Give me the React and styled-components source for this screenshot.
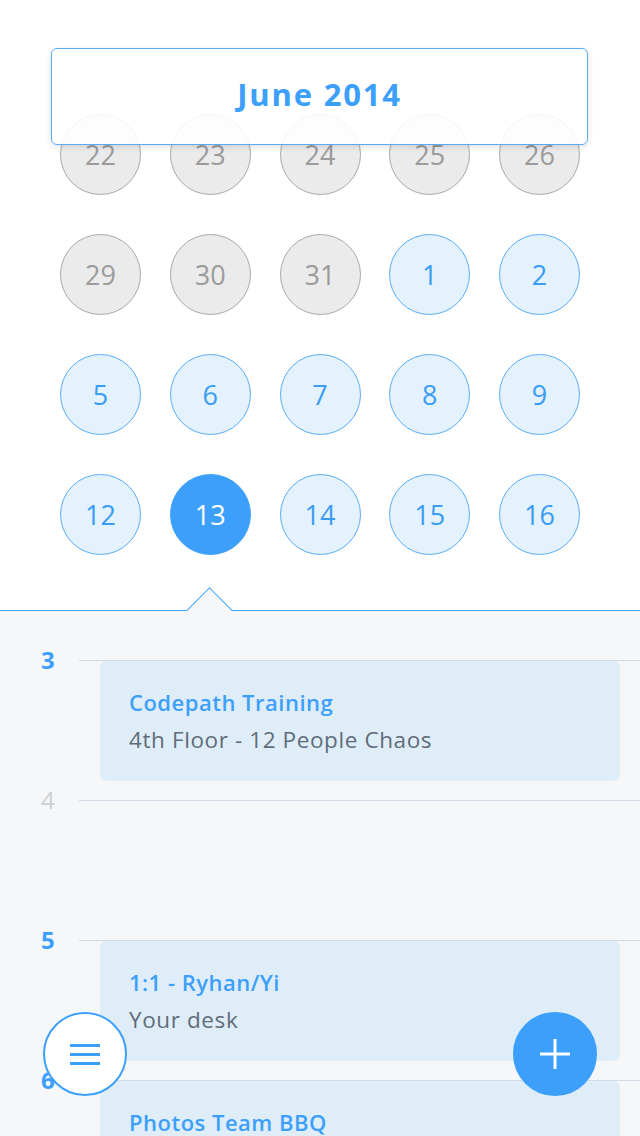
import styled, { createGlobalStyle } from 'styled-components';

const BLUE = '#3ca0fb';

const GlobalStyle = createGlobalStyle`
  html, body {
    margin: 0;
    padding: 0;
    background: #ffffff;
  }
  body {
    font-family: "Open Sans", Lato, sans-serif;
  }
`;

const Screen = styled.div`
  position: relative;
  width: 640px;
  height: 1136px;
  overflow: hidden;
  background: #ffffff;
`;

// Month header floating over the grid
const MonthHeader = styled.div`
  position: absolute;
  top: 48px;
  left: 51px;
  width: 537px;
  height: 97px;
  box-sizing: border-box;
  padding-bottom: 5px;
  border: 1px solid #58acf6;
  border-radius: 6px;
  background: rgba(255, 255, 255, 0.88);
  box-shadow: 0 2px 6px rgba(0, 0, 0, 0.12);
  display: flex;
  align-items: center;
  justify-content: center;
  z-index: 5;
`;

const MonthTitle = styled.h1`
  margin: 0;
  font-size: 31px;
  font-weight: 700;
  letter-spacing: 1.8px;
  color: ${BLUE};
  line-height: 36px;
`;

const Calendar = styled.div`
  padding: 114px 60px 55px;
  display: flex;
  flex-direction: column;
  gap: 39px;
`;

const Week = styled.div`
  display: flex;
  justify-content: space-between;
`;

const Day = styled.div`
  width: 81px;
  height: 81px;
  box-sizing: border-box;
  border-radius: 50%;
  display: flex;
  align-items: center;
  justify-content: center;
  font-size: 27px;
  border: 1px solid
    ${(p) => (p.$kind === 'past' ? '#a9a9a9' : p.$kind === 'selected' ? BLUE : '#5aacf5')};
  background: ${(p) =>
    p.$kind === 'past' ? '#ebebeb' : p.$kind === 'selected' ? BLUE : '#e4f2fe'};
  color: ${(p) =>
    p.$kind === 'past' ? '#9b9b9b' : p.$kind === 'selected' ? '#ffffff' : '#3a9cf2'};
`;

// Agenda below the calendar
const Agenda = styled.div`
  position: relative;
  border-top: 1px solid ${BLUE};
  background: #f5f7f9;
  padding-top: 49px;
  min-height: 600px;
`;

const Notch = styled.div`
  position: absolute;
  top: -17px;
  left: 193px;
  width: 32px;
  height: 32px;
  background: #f5f7f9;
  border-top: 1px solid ${BLUE};
  border-left: 1px solid ${BLUE};
  transform: rotate(45deg);
`;

const HourRow = styled.div`
  position: relative;
  height: 140px;
  display: grid;
  grid-template-columns: 79px 1fr;
`;

const HourLabel = styled.div`
  font-size: 24px;
  font-weight: ${(p) => (p.$busy ? 700 : 400)};
  color: ${(p) => (p.$busy ? BLUE : '#cdd0d4')};
  padding-left: 41px;
  margin-top: -16px;
  line-height: 32px;
`;

const HourBody = styled.div`
  border-top: 1px solid #d2dce6;
  padding: 0 20px 0 21px;
`;

const EventCard = styled.div`
  height: 120px;
  box-sizing: border-box;
  background: #dfedf9;
  border-radius: 6px;
  padding: 26px 29px 0;
`;

const EventTitle = styled.div`
  font-size: 22px;
  font-weight: 600;
  letter-spacing: 0.5px;
  color: ${BLUE};
  line-height: 30px;
`;

const EventPlace = styled.div`
  margin-top: 8px;
  font-size: 22.5px;
  letter-spacing: 0.6px;
  color: #606c79;
  line-height: 30px;
`;

const Fab = styled.button`
  position: absolute;
  bottom: 40px;
  ${(p) => (p.$side === 'left' ? 'left: 43px;' : 'right: 43px;')}
  width: 84px;
  height: 84px;
  box-sizing: border-box;
  border-radius: 50%;
  border: 2px solid ${BLUE};
  background: ${(p) => (p.$filled ? BLUE : '#ffffff')};
  display: flex;
  align-items: center;
  justify-content: center;
  padding: 0;
  z-index: 10;
`;

const weeks = [
  [22, 23, 24, 25, 26],
  [29, 30, 31, 1, 2],
  [5, 6, 7, 8, 9],
  [12, 13, 14, 15, 16],
];

const hours = [
  { hour: 3, event: { title: 'Codepath Training', place: '4th Floor - 12 People Chaos' } },
  { hour: 4 },
  { hour: 5, event: { title: '1:1 - Ryhan/Yi', place: 'Your desk' } },
  { hour: 6, event: { title: 'Photos Team BBQ', place: 'Cafeteria' } },
];

function dayKind(week, value) {
  if (week === 0 || (week === 1 && value > 20)) return 'past';
  if (week === 3 && value === 13) return 'selected';
  return 'current';
}

export default function App() {
  return (
    <Screen>
      <GlobalStyle />
      <MonthHeader>
        <MonthTitle>June 2014</MonthTitle>
      </MonthHeader>

      <Calendar>
        {weeks.map((week, wi) => (
          <Week key={wi}>
            {week.map((d) => (
              <Day key={d} $kind={dayKind(wi, d)}>
                {d}
              </Day>
            ))}
          </Week>
        ))}
      </Calendar>

      <Agenda>
        <Notch />
        {hours.map((h) => (
          <HourRow key={h.hour}>
            <HourLabel $busy={!!h.event}>{h.hour}</HourLabel>
            <HourBody>
              {h.event && (
                <EventCard>
                  <EventTitle>{h.event.title}</EventTitle>
                  <EventPlace>{h.event.place}</EventPlace>
                </EventCard>
              )}
            </HourBody>
          </HourRow>
        ))}
      </Agenda>

      <Fab $side="left" aria-label="Menu">
        <svg width="32" height="24" viewBox="0 0 32 24">
          <rect x="1" y="2" width="30" height="3" fill={BLUE} />
          <rect x="1" y="11" width="30" height="3" fill={BLUE} />
          <rect x="1" y="20" width="30" height="3" fill={BLUE} />
        </svg>
      </Fab>
      <Fab $side="right" $filled aria-label="Add">
        <svg width="32" height="32" viewBox="0 0 32 32">
          <rect x="14.5" y="1" width="3" height="30" fill="#ffffff" />
          <rect x="1" y="14.5" width="30" height="3" fill="#ffffff" />
        </svg>
      </Fab>
    </Screen>
  );
}
